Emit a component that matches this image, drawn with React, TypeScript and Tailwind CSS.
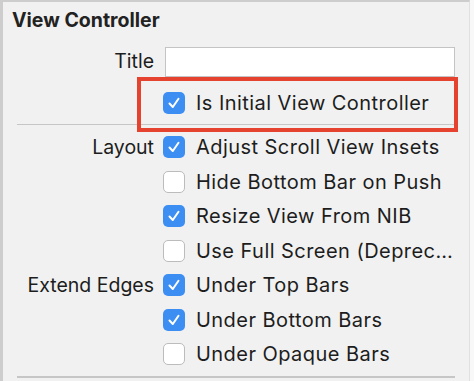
import React from 'react';

type Row = { label?: string; text: string; checked: boolean };

const rows: Row[] = [
  { label: 'Layout', text: 'Adjust Scroll View Insets', checked: true },
  { text: 'Hide Bottom Bar on Push', checked: false },
  { text: 'Resize View From NIB', checked: true },
  { text: 'Use Full Screen (Deprec…', checked: false },
  { label: 'Extend Edges', text: 'Under Top Bars', checked: true },
  { text: 'Under Bottom Bars', checked: true },
  { text: 'Under Opaque Bars', checked: false },
];

function Checkbox({ checked }: { checked: boolean }) {
  if (checked) {
    return (
      <div className="w-[22px] h-[22px] rounded-[5px] bg-[#3d8ef3] flex items-center justify-center shrink-0">
        <svg width="14" height="14" viewBox="0 0 14 14" fill="none">
          <path d="M2.5 7.5 L5.8 11 L11.5 2.8" stroke="white" strokeWidth="2" strokeLinecap="round" strokeLinejoin="round" />
        </svg>
      </div>
    );
  }
  return <div className="w-[22px] h-[22px] rounded-[5px] bg-white border border-[#bcbcbc] shrink-0" />;
}

function CheckRow({ label, text, checked }: Row) {
  return (
    <div className="flex items-center h-[34.5px]">
      <div className="w-[154px] text-right whitespace-nowrap text-[19.5px] tracking-normal">{label}</div>
      <div className="ml-[9px]">
        <Checkbox checked={checked} />
      </div>
      <div className="ml-[11px] whitespace-nowrap">{text}</div>
    </div>
  );
}

export default function App() {
  return (
    <div className="w-[474px] h-[381px] bg-[#f8f8f8] overflow-hidden">
      <div
        className="relative w-[470px] h-[381px] bg-[#f1f1f1] border-l-[3px] border-t-[2px] border-r border-[#cdcdcd] border-r-[#e0e0e0] text-[#1d1d1d] text-[20px] tracking-[0.45px]"
        style={{ fontFamily: 'Inter, "Liberation Sans", sans-serif' }}
      >
        <div className="h-[38px] pl-[9px] pt-[4px] text-[19.5px] tracking-normal font-bold text-[#222]">View Controller</div>

        <div className="flex items-center mt-[7px] h-[30px]">
          <div className="w-[151px] text-right text-[19.5px] tracking-normal">Title</div>
          <div className="ml-[11px] w-[290px] h-[30px] bg-white border border-[#c4c4c4]" />
        </div>

        <div className="flex items-center mt-[9px] h-[34px]">
          <div className="w-[151px]" />
          <div className="ml-[9px]">
            <Checkbox checked />
          </div>
          <div className="ml-[11px] whitespace-nowrap">Is Initial View Controller</div>
        </div>

        <div className="mt-[4px] ml-[14px] w-[438px] h-px bg-[#c6c6c6]" />

        <div className="mt-[5px] -ml-[3px]">
          {rows.map((r) => (
            <CheckRow key={r.text} {...r} />
          ))}
        </div>

        <div className="mt-[4px] ml-[14px] w-[438px] h-[2px] bg-[#c6c6c6]" />

        <div className="absolute left-[134px] top-[75px] w-[321px] h-[55px] border-[4px] border-[#e5432f]" />
      </div>
    </div>
  );
}
